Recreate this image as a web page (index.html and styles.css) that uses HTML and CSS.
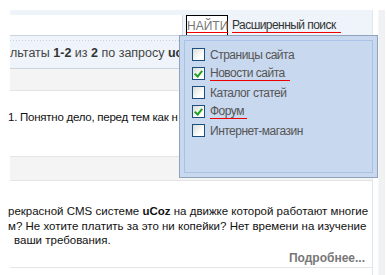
FILE: index.html
```html
<!DOCTYPE html>
<html lang="ru">
<head>
    <meta charset="UTF-8">
    <title>Поиск - uCoz</title>
    <link rel="stylesheet" href="styles.css">
</head>
<body>
    <div class="page">
        <div class="main">
            <div class="search-bar">
                <div class="search-input"></div>
                <button class="search-btn">НАЙТИ</button>
                <a class="adv-link" href="#">Расширенный поиск</a>
            </div>
            <div class="results-info">
                льтаты <b>1-2</b> из <b>2</b> по запросу <b>ucoz</b>
            </div>
            <div class="band"></div>
            <div class="entry-title">1. Понятно дело, перед тем как н</div>
            <div class="band band-low"></div>
            <div class="entry-text">
                <p>рекрасной CMS системе <b>uCoz</b> на движке которой работают многие</p>
                <p>м? Не хотите платить за это ни копейки? Нет времени на изучение</p>
                <p class="indent">ваши требования.</p>
            </div>
            <div class="more"><a href="#">Подробнее...</a></div>
        </div>
        <div class="side-strip"></div>

        <div class="dropdown">
            <div class="dropdown-inner">
                <label class="opt"><span class="box"></span>Страницы сайта</label>
                <label class="opt"><span class="box checked"></span><span class="mark">Новости сайта&nbsp;&nbsp;</span></label>
                <label class="opt"><span class="box"></span>Каталог статей</label>
                <label class="opt"><span class="box checked"></span><span class="mark">Форум&nbsp;</span></label>
                <label class="opt"><span class="box"></span>Интернет-магазин</label>
            </div>
        </div>
    </div>
</body>
</html>
```
FILE: styles.css
```css
body {
    margin: 0;
    background: #fff;
    font-family: "Liberation Sans", Arial, sans-serif;
    font-size: 11px;
    overflow: hidden;
}
.page {
    position: relative;
    display: flex;
    width: 387px;
    height: 275px;
    padding-top: 10px;
    box-sizing: border-box;
}
.main {
    margin-left: 10px;
    width: 362px;
    border-right: 1px solid #dde7f1;
}
.side-strip {
    margin-left: 5px;
    width: 6px;
    background: #f0f1f3;
    border-left: 1px solid #f7f7f7;
}
.search-bar {
    display: flex;
    align-items: flex-start;
    height: 20px;
    padding-top: 5px;
    background: #eef4fa;
    border-bottom: 1px solid #c9d4e0;
}
.search-input {
    width: 172px;
    height: 20px;
    background: #fff;
    border-right: 1px solid #d4dde8;
}
.search-btn {
    margin-left: 3px;
    width: 42px;
    height: 21px;
    padding: 0;
    border: 1px solid #000;
    background: #fff;
    color: #777;
    font-family: inherit;
    font-size: 12px;
    text-decoration: underline;
    text-decoration-color: #e00;
    text-underline-offset: 2px;
}
.adv-link {
    margin-left: 4px;
    padding-top: 4px;
    padding-right: 5px;
    color: #333;
    font-size: 12px;
    line-height: 13px;
    letter-spacing: -0.55px;
    text-decoration: none;
    border-bottom: 1px solid #e00;
}
.results-info {
    height: 32px;
    line-height: 35px;
    background: #eef4fa;
    border-bottom: 1px solid #ccd5de;
    color: #444;
    font-size: 12.5px;
    white-space: nowrap;
    overflow: hidden;
    background-image: repeating-linear-gradient(90deg, #c5d2df 0 1px, transparent 1px 3px);
    background-size: 100% 1px;
    background-position: 0 4px;
    background-repeat: no-repeat;
}
.results-info b {
    color: #333;
}
.band {
    height: 21px;
    background: #f4f4f4;
    border-bottom: 1px solid #e4e4e4;
}
.band-low {
    height: 23px;
    border-top: 1px solid #e4e4e4;
}
.entry-title {
    height: 65px;
    line-height: 52px;
    font-size: 11.5px;
    letter-spacing: -0.25px;
    color: #111;
    white-space: nowrap;
    overflow: hidden;
    margin-left: -2px;
}
.entry-text {
    padding-top: 23px;
    margin-left: -2px;
    color: #111;
    font-size: 11.5px;
    line-height: 14.5px;
    white-space: nowrap;
    overflow: hidden;
}
.entry-text p {
    margin: 0;
}
.entry-text .indent {
    padding-left: 6px;
}
.more {
    text-align: right;
    padding: 3px 7px 0 0;
    height: 16px;
    border-bottom: 1px solid #e6e6e6;
}
.more a {
    color: #777;
    font-weight: bold;
    text-decoration: none;
    font-size: 12px;
}
.dropdown {
    position: absolute;
    left: 179px;
    top: 35px;
    width: 199px;
    height: 143px;
    padding: 4px;
    box-sizing: border-box;
    background: #c8d8ee;
    border: 1px solid #8fa3bb;
}
.dropdown-inner {
    height: 100%;
    box-sizing: border-box;
    border: 1px solid #a9c2e6;
    padding: 4px 0 0 7px;
}
.opt {
    display: flex;
    align-items: center;
    height: 19px;
    color: #555;
    font-size: 12px;
    letter-spacing: -0.5px;
}
.box {
    width: 11px;
    height: 11px;
    margin-right: 5px;
    border: 1px solid #1c4f7f;
    background: linear-gradient(135deg, #dcdcd6, #fff 70%);
    position: relative;
}
.box.checked::after {
    content: "";
    position: absolute;
    left: 3px;
    top: 1px;
    width: 3px;
    height: 6px;
    border: solid #21a121;
    border-width: 0 2px 2px 0;
    transform: rotate(40deg);
}
.mark {
    border-bottom: 1px solid #e00;
    line-height: 14px;
}
```
